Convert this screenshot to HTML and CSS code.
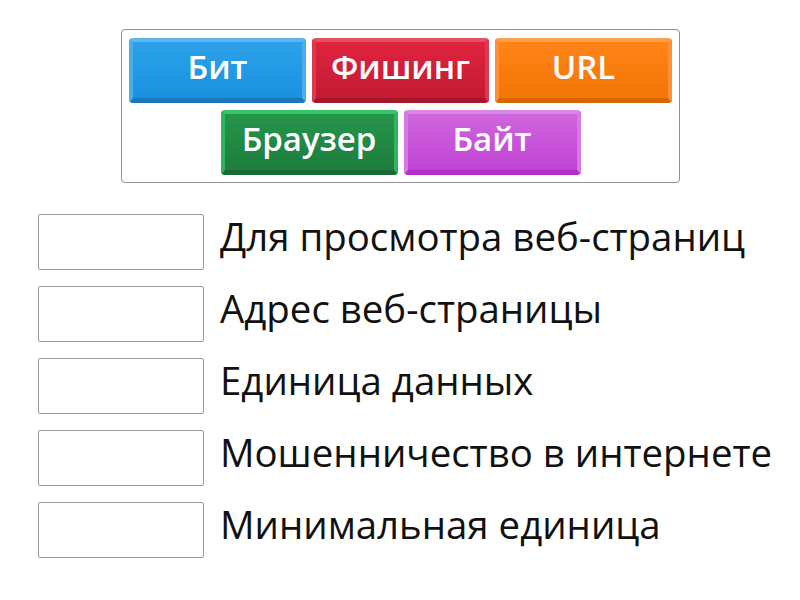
FILE: index.html
```html
<!DOCTYPE html>
<html lang="ru">
<head>
<meta charset="utf-8">
<link rel="stylesheet" href="styles.css">
</head>
<body>
<div class="bank">
  <div class="tile blue"><span>Бит</span></div>
  <div class="tile red"><span>Фишинг</span></div>
  <div class="tile orange"><span>URL</span></div>
  <div class="tile green"><span>Браузер</span></div>
  <div class="tile purple"><span>Байт</span></div>
</div>
<div class="list">
  <div class="row"><div class="slot"></div><div class="label">Для просмотра веб-страниц</div></div>
  <div class="row"><div class="slot"></div><div class="label">Адрес веб-страницы</div></div>
  <div class="row"><div class="slot"></div><div class="label">Единица данных</div></div>
  <div class="row"><div class="slot"></div><div class="label">Мошенничество в интернете</div></div>
  <div class="row"><div class="slot"></div><div class="label">Минимальная единица</div></div>
</div>
</body>
</html>
```
FILE: styles.css
```css
* { box-sizing: border-box; }
html, body { margin: 0; padding: 0; background: #fff; }
body { font-family: "Open Sans", "Noto Sans", sans-serif; width: 800px; height: 600px; overflow: hidden; }

.bank {
  margin: 29px 0 0 121px;
  width: 559px;
  height: 154px;
  border: 1px solid #8e8e8e;
  border-radius: 4px;
  padding: 8px 7px;
  display: flex;
  flex-wrap: wrap;
  justify-content: center;
  align-content: flex-start;
  column-gap: 6px;
  row-gap: 7px;
}
.tile {
  width: 177px;
  height: 65px;
  border-radius: 4px;
  border: 4px solid;
  border-bottom-width: 5px;
  display: flex;
  align-items: center;
  justify-content: center;
  color: #fff;
  font-weight: 600;
  font-size: 33px;
  line-height: 1;
}
.tile span { margin-top: -8px; }
.blue { background: linear-gradient(#2da2ea, #1a90e0); border-color: #5cb6ee #4aaeea #1877bd; }
.red { background: linear-gradient(#df2440, #c41a32); border-color: #e4505f #dc3a4c #a5172b; }
.orange { background: linear-gradient(#ff8418, #f47406); border-color: #ff9d48 #ff9036 #d66707; }
.green { background: linear-gradient(#259549, #1e7d3f); border-color: #36c767 #30b55c #1a6a36; }
.purple { background: linear-gradient(#cf66dc, #c043d5); border-color: #da88e7 #d57ae4 #b12cc8; }

.list {
  margin: 31px 0 0 38px;
  display: flex;
  flex-direction: column;
  gap: 16px;
}
.row {
  display: flex;
  align-items: center;
  height: 56px;
}
.slot {
  width: 166px;
  height: 56px;
  border: 1px solid #9a9a9a;
  border-radius: 2px;
  background: #fff;
  flex: none;
}
.label {
  margin-left: 16px;
  font-size: 38.4px;
  color: #111;
  line-height: 1;
  margin-top: -12px;
  white-space: nowrap;
}
```
